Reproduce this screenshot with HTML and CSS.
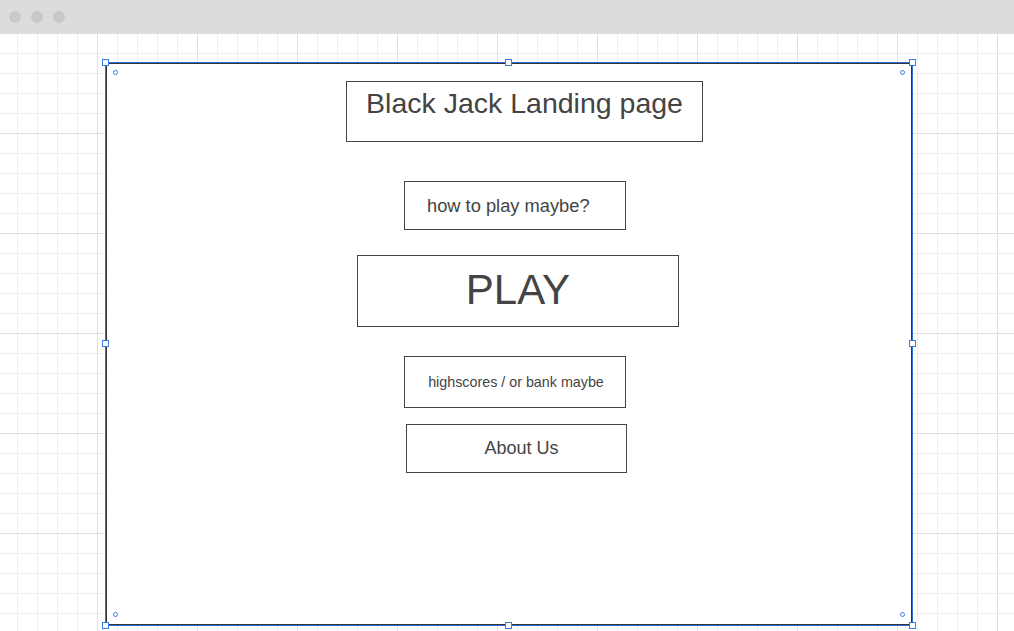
FILE: index.html
```html
<!DOCTYPE html>
<html lang="en">

<head>
    <meta charset="UTF-8">
    <meta name="viewport" content="width=device-width, initial-scale=1.0">
    <title>Black Jack Landing page</title>
    <link rel="stylesheet" href="styles.css">
</head>

<body>
    <div class="top-bar">
        <span class="dot"></span>
        <span class="dot"></span>
        <span class="dot"></span>
    </div>

    <div class="canvas">
        <div class="frame">
            <!-- selection handles -->
            <span class="handle tl"></span>
            <span class="handle tm"></span>
            <span class="handle tr"></span>
            <span class="handle ml"></span>
            <span class="handle mr"></span>
            <span class="handle bl"></span>
            <span class="handle bm"></span>
            <span class="handle br"></span>
            <span class="pin ptl"></span>
            <span class="pin ptr"></span>
            <span class="pin pbl"></span>
            <span class="pin pbr"></span>

            <div class="box title-box">Black Jack Landing page</div>
            <div class="box how-box">how to play maybe?</div>
            <div class="box play-box">PLAY</div>
            <div class="box score-box">highscores / or bank maybe</div>
            <div class="box about-box">About Us</div>
        </div>
    </div>
</body>

</html>
```

FILE: styles.css
```css
html,
body {
    margin: 0;
    height: 100%;
    overflow: hidden;
}

body {
    font-family: "Liberation Sans", Arial, sans-serif;
    color: #444;
    background: #fff;
}

.top-bar {
    height: 33px;
    background-color: #dcdcdc;
    display: flex;
    align-items: center;
    gap: 10px;
    padding-left: 9px;
    box-sizing: border-box;
}

.dot {
    width: 12px;
    height: 12px;
    border-radius: 50%;
    background-color: #c9c9c9;
}

.canvas {
    height: 598px;
    padding-top: 29px;
    padding-left: 105px;
    box-sizing: border-box;
    /* grid: thin lines every 20px, stronger every 100px */
    background-image:
        linear-gradient(to right, transparent 97px, #e0e0e0 97px, #e0e0e0 98px, transparent 98px),
        linear-gradient(to bottom, #e0e0e0 0, #e0e0e0 1px, transparent 1px),
        linear-gradient(to right, transparent 17px, #eeeeee 17px, #eeeeee 18px, transparent 18px),
        linear-gradient(to bottom, #eeeeee 0, #eeeeee 1px, transparent 1px);
    background-size: 100px 100px, 100px 100px, 20px 20px, 20px 20px;
}

.frame {
    position: relative;
    width: 808px;
    height: 564px;
    box-sizing: border-box;
    border: 1px solid #2f6fdc;
    box-shadow: inset 0 0 0 1px #333;
    background: #fff;
    padding-top: 18px;
    display: flex;
    flex-direction: column;
    align-items: flex-start;
}

.handle {
    position: absolute;
    width: 7px;
    height: 7px;
    box-sizing: border-box;
    border: 1px solid #3a7be2;
    background: #fff;
}

.handle.tl { left: -4px; top: -4px; }
.handle.tm { left: calc(50% - 4px); top: -4px; }
.handle.tr { right: -4px; top: -4px; }
.handle.ml { left: -4px; top: calc(50% - 4px); }
.handle.mr { right: -4px; top: calc(50% - 4px); }
.handle.bl { left: -4px; bottom: -4px; }
.handle.bm { left: calc(50% - 4px); bottom: -4px; }
.handle.br { right: -4px; bottom: -4px; }

.pin {
    position: absolute;
    width: 5px;
    height: 5px;
    box-sizing: border-box;
    border: 1px solid #3a7be2;
    border-radius: 50%;
    background: #fff;
}

.pin.ptl { left: 7px; top: 7px; }
.pin.ptr { right: 7px; top: 7px; }
.pin.pbl { left: 7px; bottom: 8px; }
.pin.pbr { right: 7px; bottom: 8px; }

.box {
    box-sizing: border-box;
    border: 1px solid #444;
    display: flex;
    align-items: center;
    justify-content: center;
    white-space: nowrap;
}

.title-box {
    margin-left: 240px;
    width: 357px;
    height: 61px;
    align-items: flex-start;
    padding-top: 5px;
    font-size: 28.5px;
}

.how-box {
    margin-top: 39px;
    margin-left: 298px;
    width: 222px;
    height: 49px;
    justify-content: flex-start;
    padding-left: 22px;
    font-size: 18.3px;
}

.play-box {
    margin-top: 25px;
    margin-left: 251px;
    width: 322px;
    height: 72px;
    font-size: 42px;
    padding-bottom: 3px;
}

.score-box {
    margin-top: 29px;
    margin-left: 298px;
    width: 222px;
    height: 52px;
    font-size: 14.3px;
    padding-left: 2px;
}

.about-box {
    margin-top: 16px;
    margin-left: 300px;
    width: 221px;
    height: 49px;
    font-size: 18px;
    padding-left: 10px;
}
```
